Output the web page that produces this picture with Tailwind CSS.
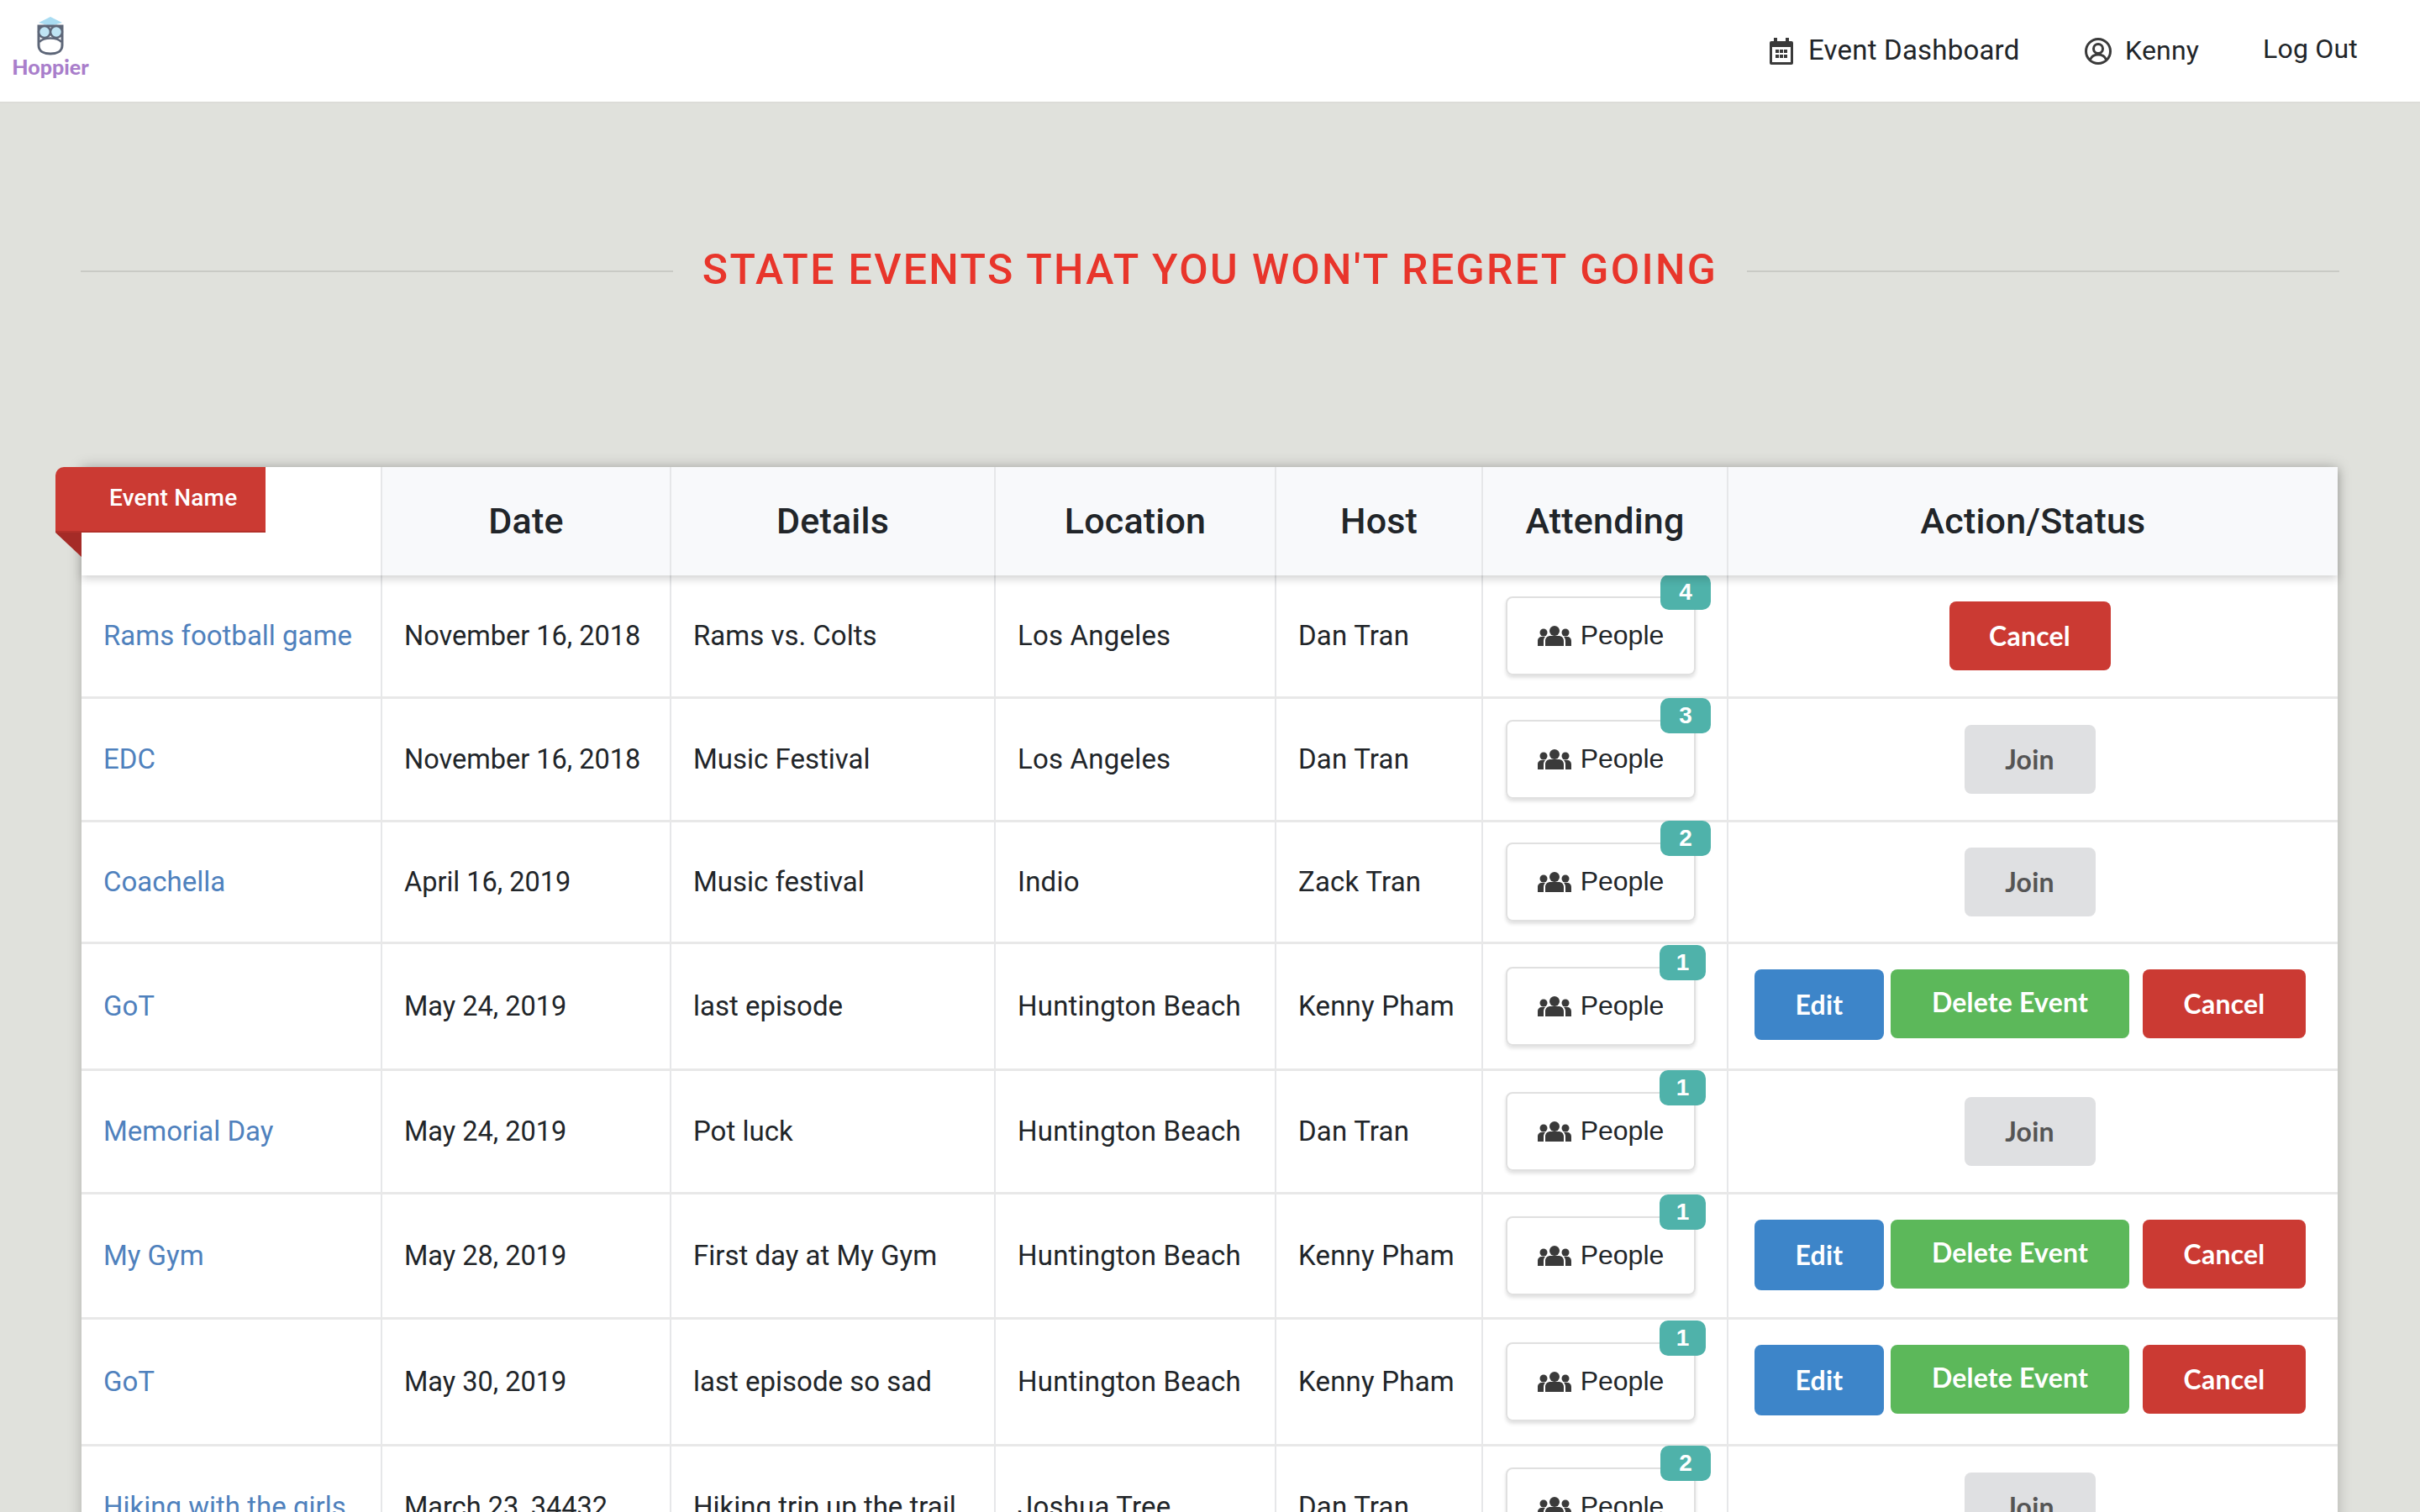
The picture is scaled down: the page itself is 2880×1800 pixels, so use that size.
<!DOCTYPE html>
<html lang="en">
<head>
    <meta charset="UTF-8">
    <title>Hoppier</title>
    <script src="https://cdn.jsdelivr.net/npm/@tailwindcss/browser@4"></script>
</head>
<body class="h-[1800px] overflow-hidden bg-[#e0e1dc] font-['Roboto',sans-serif] text-[33px] tracking-[0.2px] text-[#212529]">

    <!-- Navbar -->
    <nav class="h-[123px] bg-white border-b-2 border-[#dcdcd8] flex items-center justify-between pr-[74px] pl-[13px]">
        <div class="flex flex-col items-center w-[94px] -mt-[11px]">
            <svg width="40" height="48" viewBox="0 0 40 48" fill="none">
                <path d="M6 9 L20 2 L34 9 L20 13 Z" fill="#a9dcf2"/>
                <path d="M6 13 H34 V36 C34 44 26 46 20 46 C14 46 6 44 6 36 Z" fill="#fff" stroke="#5d6678" stroke-width="3"/>
                <circle cx="13" cy="20" r="7" fill="#bfe4f4" stroke="#5d6678" stroke-width="2.5"/>
                <circle cx="27" cy="20" r="7" fill="#bfe4f4" stroke="#5d6678" stroke-width="2.5"/>
                <path d="M7 32 C12 26 28 26 33 32" stroke="#5d6678" stroke-width="2.5"/>
            </svg>
            <span class="font-['Lato',sans-serif] font-black text-[25px] tracking-normal leading-[26px] text-[#a97ecb]">Hoppier</span>
        </div>
        <div class="flex items-center -mt-[2px]">
            <svg width="28" height="32" viewBox="0 0 28 32" class="mr-[18px] mt-[2px]" fill="#3a3a3a">
                <path d="M5 0h4v4h10V0h4v4h3a2 2 0 0 1 2 2v24a2 2 0 0 1-2 2H2a2 2 0 0 1-2-2V6a2 2 0 0 1 2-2h3zM3 11v18h22V11z"/>
                <path d="M7 14h4v4H7zM12 14h4v4h-4zM17 14h4v4h-4zM7 20h4v4H7zM12 20h4v4h-4zM17 20h4v4h-4z"/>
            </svg>
            <span class="w-[329px]">Event Dashboard</span>
            <svg width="32" height="32" viewBox="0 0 32 32" class="mr-[16px] mt-[2px]" fill="none" stroke="#3a3a3a" stroke-width="3">
                <circle cx="16" cy="16" r="14.5"/>
                <circle cx="16" cy="13" r="5.5"/>
                <path d="M6.5 26c2-5 6-6 9.500-6s7.500 1 9.500 6"/>
            </svg>
            <span class="w-[164px] text-[32px]">Kenny</span>
            <span class="-mt-[4px] text-[32px]">Log Out</span>
        </div>
    </nav>

    <!-- Title -->
    <div class="flex items-center mt-[163px] ml-[96px] w-[2688px] gap-[35px]">
        <div class="flex-1 h-[2px] bg-[#c9cac5] mt-[4px]"></div>
        <h1 class="text-[50px] leading-[70px] tracking-[2.35px] text-[#e8352b] font-medium">STATE EVENTS THAT YOU WON'T REGRET GOING</h1>
        <div class="flex-1 h-[2px] bg-[#c9cac5] mt-[4px]"></div>
    </div>

    <!-- Events table -->
    <div class="relative mt-[200px] ml-[97px] w-[2685px] bg-white shadow-[0_0_16px_rgba(0,0,0,0.22)]">
        <!-- Ribbon -->
        <div class="absolute z-20 left-[-31px] top-0 w-[250px] h-[78px] bg-[#cb3a33] border-b-2 border-[#b3302a] rounded-tl-[10px] pl-[64px] pt-[20px] text-[28px] leading-[34px] font-medium text-white">Event Name</div>
        <div class="absolute z-20 left-[-31px] top-[78px] w-[31px] h-[29px] bg-[#a52b27] [clip-path:polygon(0_0,100%_0,100%_100%)]"></div>

        <div class="relative z-10 h-[129px] grid grid-cols-[358px_344px_386px_334px_246px_292px_725px] items-stretch text-[43px] font-medium text-center shadow-[0_4px_10px_rgba(0,0,0,0.18)]">
            <div class="bg-white border-r-2 border-[#e6e7e9]"></div>
            <div class="bg-[#f8f9fb] border-r-2 border-[#e6e7e9] flex items-center justify-center">Date</div>
            <div class="bg-[#f8f9fb] border-r-2 border-[#e6e7e9] flex items-center justify-center">Details</div>
            <div class="bg-[#f8f9fb] border-r-2 border-[#e6e7e9] flex items-center justify-center">Location</div>
            <div class="bg-[#f8f9fb] border-r-2 border-[#e6e7e9] flex items-center justify-center">Host</div>
            <div class="bg-[#f8f9fb] border-r-2 border-[#e6e7e9] flex items-center justify-center">Attending</div>
            <div class="bg-[#f8f9fb] flex items-center justify-center">Action/Status</div>
        </div>

        <div id="rows"></div>
    </div>

    <script>
        const cancelBtn = '<button class="w-[192px] h-[82px] rounded-lg bg-[#cb3a33] text-white font-[\'Lato\',sans-serif] font-bold text-[32px]">Cancel</button>';
        const joinBtn = '<button class="w-[156px] h-[82px] rounded-lg bg-[#dfe0e2] text-[#555] font-[\'Lato\',sans-serif] font-bold text-[32px]">Join</button>';
        const ownerBtns = '<button class="w-[154px] h-[84px] rounded-lg bg-[#3d85c9] text-white font-[\'Lato\',sans-serif] font-bold text-[32px]">Edit</button>'
            + '<button class="w-[284px] h-[82px] ml-[8px] pb-[4px] rounded-lg bg-[#5cb85a] text-white font-[\'Lato\',sans-serif] font-bold text-[32px]">Delete Event</button>'
            + '<button class="w-[194px] h-[82px] ml-[16px] rounded-lg bg-[#cb3a33] text-white font-[\'Lato\',sans-serif] font-bold text-[32px]">Cancel</button>';

        const events = [
            { h: 'h-[147px]', name: 'Rams football game', date: 'November 16, 2018', details: 'Rams vs. Colts', location: 'Los Angeles', host: 'Dan Tran', count: 4, action: 'cancel' },
            { h: 'h-[147px]', name: 'EDC', date: 'November 16, 2018', details: 'Music Festival', location: 'Los Angeles', host: 'Dan Tran', count: 3, action: 'join' },
            { h: 'h-[145px]', name: 'Coachella', date: 'April 16, 2019', details: 'Music festival', location: 'Indio', host: 'Zack Tran', count: 2, action: 'join' },
            { h: 'h-[151px]', name: 'GoT', date: 'May 24, 2019', details: 'last episode', location: 'Huntington Beach', host: 'Kenny Pham', count: 1, action: 'owner' },
            { h: 'h-[147px]', name: 'Memorial Day', date: 'May 24, 2019', details: 'Pot luck', location: 'Huntington Beach', host: 'Dan Tran', count: 1, action: 'join' },
            { h: 'h-[149px]', name: 'My Gym', date: 'May 28, 2019', details: 'First day at My Gym', location: 'Huntington Beach', host: 'Kenny Pham', count: 1, action: 'owner' },
            { h: 'h-[151px]', name: 'GoT', date: 'May 30, 2019', details: 'last episode so sad', location: 'Huntington Beach', host: 'Kenny Pham', count: 1, action: 'owner' },
            { h: 'h-[147px]', name: 'Hiking with the girls', date: 'March 23, 34432', details: 'Hiking trip up the trail', location: 'Joshua Tree', host: 'Dan Tran', count: 2, action: 'join' },
        ];

        const peopleIcon = `<svg width="40" height="24" viewBox="0 0 40 24" fill="#3a3a3a" class="mr-[11px]">
            <circle cx="7" cy="8" r="4.500"/><circle cx="33" cy="8" r="4.500"/><circle cx="20" cy="6" r="6"/>
            <path d="M0 24v-6c0-3 2-5 5-5h4c-2 2-2 4-2 6v5zM40 24v-6c0-3-2-5-5-5h-4c2 2 2 4 2 6v5zM9 24v-6c0-4 3-6 6-6h10c3 0 6 2 6 6v6z"/>
        </svg>`;

        document.getElementById('rows').innerHTML = events.map(e => {
            const action = e.action === 'owner' ? ownerBtns : (e.action === 'join' ? joinBtn : cancelBtn);
            const actionClass = e.action === 'owner' ? 'flex items-start pl-[31px] pt-[30px]' : 'flex items-center justify-center pr-[8px]';
            const badgeClass = e.count === 1 ? 'right-[-14px] w-[55px]' : 'right-[-20px] w-[60px]';
            return `<div class="${e.h} grid grid-cols-[358px_344px_386px_334px_246px_292px_725px] border-b-[3px] border-[#e8e8e8]">
                <div class="border-r-2 border-[#e6e7e9] flex items-center px-[26px] text-[#4f81bd] tracking-normal">${e.name}</div>
                <div class="border-r-2 border-[#e6e7e9] flex items-center px-[26px] text-[32.5px] tracking-normal">${e.date}</div>
                <div class="border-r-2 border-[#e6e7e9] flex items-center px-[26px] tracking-normal">${e.details}</div>
                <div class="border-r-2 border-[#e6e7e9] flex items-center px-[26px]">${e.location}</div>
                <div class="border-r-2 border-[#e6e7e9] flex items-center px-[26px]">${e.host}</div>
                <div class="border-r-2 border-[#e6e7e9] flex items-center pl-[27px]">
                    <div class="relative w-[226px] h-[94px] rounded-lg border-2 border-[#e0e0e0] shadow-[0_3px_4px_rgba(0,0,0,0.12)] flex items-center justify-center font-['Liberation_Sans',sans-serif] text-[32px] tracking-normal">
                        ${peopleIcon}<span class="-mt-[3px]">People</span>
                        <span class="absolute top-[-28px] h-[42px] rounded-[10px] bg-[#4fb2aa] text-white font-bold text-[28px] flex items-center justify-center ${badgeClass}">${e.count}</span>
                    </div>
                </div>
                <div class="${actionClass}">${action}</div>
            </div>`;
        }).join('');
    </script>

</body>
</html>
